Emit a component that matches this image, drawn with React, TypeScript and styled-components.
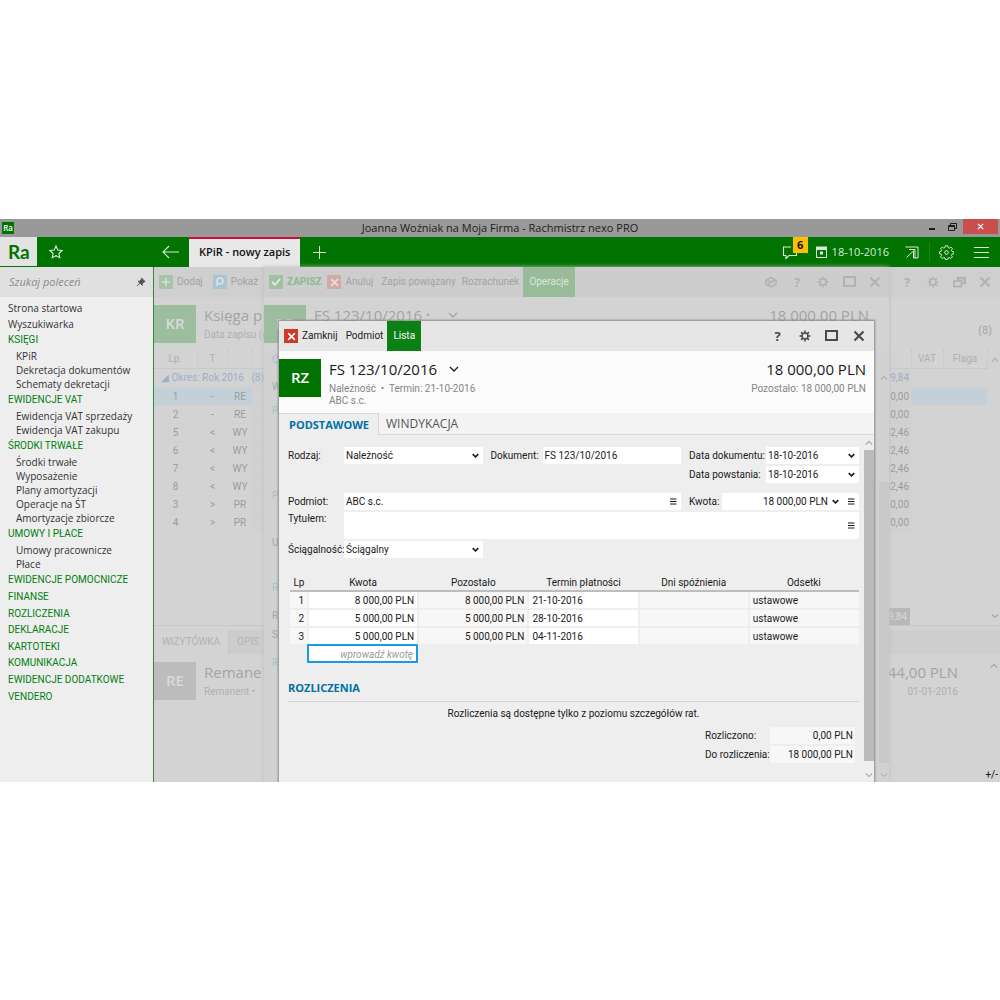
import React from "react";
import styled, { createGlobalStyle, css } from "styled-components";

const uiFont = `"Open Sans", "Noto Sans", sans-serif`;

const GlobalStyle = createGlobalStyle`
  *, *::before, *::after { box-sizing: border-box; }
  body {
    margin: 0;
    background: #fff;
    font-family: Roboto, "Noto Sans", sans-serif;
    font-size: 10px;
    line-height: 14px;
    color: #1a1a1a;
  }
  button, input, select, textarea { font: inherit; color: inherit; margin: 0; }
  button { border: 0; padding: 0; background: none; cursor: pointer; }
  ul { list-style: none; margin: 0; padding: 0; }
  h1, h2, p { margin: 0; font-weight: 400; }
  a { color: inherit; text-decoration: none; }
`;

/* ---------- icons ---------- */

const Svg = styled.svg`
  display: block;
  flex: none;
  fill: none;
  stroke: currentColor;
`;

type IconProps = { size?: number };

const CloseIcon = ({ size = 12 }: IconProps) => (
  <Svg width={size} height={size} viewBox="0 0 12 12" strokeWidth="2.2">
    <path d="M1.5 1.5l9 9M10.5 1.5l-9 9" />
  </Svg>
);
const SquareIcon = () => (
  <Svg width="13" height="12" viewBox="0 0 13 12" strokeWidth="2">
    <rect x="1" y="1" width="11" height="9" />
  </Svg>
);
const GearIcon = () => (
  <Svg width="12" height="12" viewBox="0 0 12 12" strokeWidth="1.6">
    <circle cx="6" cy="6" r="3" />
    <path d="M6 .5v2.2M6 9.3v2.2M.5 6h2.2M9.3 6h2.2M2.1 2.1l1.6 1.6M8.3 8.3l1.6 1.6M9.9 2.1L8.3 3.7M3.7 8.3L2.1 9.9" />
  </Svg>
);
const RestoreIcon = () => (
  <Svg width="13" height="12" viewBox="0 0 13 12" strokeWidth="1.8">
    <path d="M5 4V2h7v5H9.500" strokeWidth="2.4" />
    <rect x="1" y="5" width="7.500" height="5.500" />
  </Svg>
);
const CubeIcon = () => (
  <Svg width="12" height="12" viewBox="0 0 12 12" strokeWidth="1.6">
    <path d="M1 4.200L6 1.500l5 2.700v4L6 10.800 1 8.200zM3 4.800l3 1.400 4-2M3 8l6-3" />
  </Svg>
);
const ChevronDown = ({ size = 10, weight = 1.3 }: IconProps & { weight?: number }) => (
  <Svg width={size} height={size} viewBox="0 0 10 10" strokeWidth={weight}>
    <path d="M1 3l4 4 4-4" />
  </Svg>
);
const ChevronUp = () => (
  <Svg width="8" height="8" viewBox="0 0 10 10" strokeWidth="1.6">
    <path d="M1 7l4-4 4 4" />
  </Svg>
);
const LinesIcon = () => (
  <Svg width="7" height="7" viewBox="0 0 7 7" strokeWidth="1">
    <path d="M0 1h6.500M0 3.500h6.500M0 6h6.500" />
  </Svg>
);
const StarIcon = () => (
  <Svg width="14" height="14" viewBox="0 0 14 14" strokeWidth="1.1">
    <path d="M7 1l1.8 4 4.3.5L9.900 8.500l.9 4.300L7 10.700l-3.800 2.100.9-4.300L.9 5.500 5.200 5z" />
  </Svg>
);
const BackIcon = () => (
  <Svg width="17" height="14" viewBox="0 0 17 14" strokeWidth="1.1">
    <path d="M17 7H1M7 1L1 7l6 6" />
  </Svg>
);
const PlusIcon = ({ size = 13 }: IconProps) => (
  <Svg width={size} height={size} viewBox="0 0 13 13" strokeWidth={size < 13 ? 2.4 : 1}>
    <path d="M6.500 0v13M0 6.500h13" />
  </Svg>
);
const ChatIcon = () => (
  <Svg width="16" height="15" viewBox="0 0 16 15" strokeWidth="1.1">
    <path d="M9 2H1.500v8.500H4v3l3-3h7.500V7" />
  </Svg>
);
const CalendarIcon = () => (
  <Svg width="11" height="12" viewBox="0 0 11 12" strokeWidth="1">
    <rect x=".5" y="1" width="10" height="10.500" />
    <path d="M.5 2.500h10" strokeWidth="3" />
    <rect x="4.500" y="6" width="2" height="2" fill="currentColor" />
  </Svg>
);
const ExportIcon = () => (
  <Svg width="14" height="13" viewBox="0 0 14 13" strokeWidth="1">
    <path d="M.5 1h12.500v11H8.500V5.500M10 3.500L1.500 11.500M4 3.500h6v8.500" />
  </Svg>
);
const BigGearIcon = () => (
  <Svg width="15" height="15" viewBox="0 0 15 15" strokeWidth="1">
    <circle cx="7.500" cy="7.500" r="1.800" />
    <path d="M6.300.8h2.400l.4 1.800 1.200.5 1.600-1 1.500 1.600-1 1.600.5 1.100 1.800.4v2l-1.800.4-.5 1.200 1 1.500-1.600 1.600-1.500-1-1.200.5-.4 1.700H6.300l-.4-1.700-1.200-.5-1.500 1-1.600-1.600 1-1.500-.5-1.200-1.600-.4v-2l1.600-.4.5-1.100-1-1.600 1.600-1.600 1.500 1 1.200-.5z" />
  </Svg>
);
const MenuIcon = () => (
  <Svg width="15" height="11" viewBox="0 0 15 11" strokeWidth="1" shapeRendering="crispEdges">
    <path d="M0 .5h15M0 5.500h15M0 10.500h15" />
  </Svg>
);
const PinIcon = () => (
  <Svg width="10" height="10" viewBox="0 0 10 10" strokeWidth="1">
    <path d="M5.500 1l3.500 3.500-1 .3-1.700 1.700v1.800L2 4.200h1.800L5.300 2.500z" fill="currentColor" />
    <path d="M4 6L1 9" />
  </Svg>
);

/* ---------- shell ---------- */

const AppWindow = styled.div`
  margin-top: 219px;
`;

const TitleBar = styled.header`
  display: grid;
  grid-template-columns: 1fr auto 1fr;
  align-items: center;
  height: 18px;
  background: #999;
  color: #1c1c1c;
  font-family: ${uiFont};
  font-size: 11px;
`;

const AppBadge = styled.span`
  display: flex;
  align-items: center;
  justify-content: center;
  width: 12px;
  height: 12px;
  margin-left: 2px;
  background: #007300;
  color: #fff;
  font-size: 8px;
  line-height: 10px;
  font-weight: 600;
`;

const WindowControls = styled.div`
  display: flex;
  justify-content: flex-end;
  align-self: start;
  padding-right: 2px;
`;

const WindowButton = styled.button<{ $danger?: boolean }>`
  display: flex;
  align-items: center;
  justify-content: center;
  width: ${(p) => (p.$danger ? 35 : 21)}px;
  height: 15px;
  background: ${(p) => (p.$danger ? "#c94f4f" : "transparent")};
  color: ${(p) => (p.$danger ? "#fff" : "#1c1c1c")};
`;

const MainBar = styled.div`
  display: flex;
  height: 30px;
  background: #007300;
  color: #d9ead9;
  font-family: ${uiFont};
`;

const Logo = styled.span`
  width: 37px;
  margin-bottom: 1px;
  padding-left: 8px;
  background: #e3e3e3;
  color: #007300;
  font: 700 19px/29px Lato, sans-serif;
`;

const BarStart = styled.div`
  display: flex;
  align-items: center;
  justify-content: space-between;
  width: 152px;
  padding: 0 10px 0 12px;
`;

const ActiveTab = styled.button`
  padding: 0 10px 2px;
  border-top: 2px solid #d01030;
  background: #e8e8e8;
  color: #111;
  font-size: 11px;
  font-weight: 600;
`;

const IconButton = styled.button`
  display: flex;
  align-items: center;
  justify-content: center;
`;

const AddTab = styled(IconButton)`
  margin-left: 13px;
`;

const BarEnd = styled.div`
  display: flex;
  align-items: center;
  margin-left: auto;
  padding-right: 11px;
`;

const ChatButton = styled(IconButton)`
  position: relative;
  margin-right: 18px;
`;

const Count = styled.span`
  position: absolute;
  left: 11px;
  top: -8px;
  width: 15px;
  background: #ffc000;
  color: #111;
  font-size: 11px;
  font-weight: 700;
  line-height: 16px;
`;

const DateButton = styled.button`
  display: flex;
  align-items: center;
  gap: 5px;
  margin-right: 16px;
  font-size: 11px;
`;

const BarDivider = styled.span`
  width: 1px;
  height: 20px;
  margin: 0 9px 0 10px;
  background: #1d821d;
`;

const MenuButton = styled(IconButton)`
  margin-left: 20px;
`;

const Body = styled.div`
  display: grid;
  grid-template-columns: 154px minmax(0, 1fr);
`;

/* ---------- sidebar ---------- */

const Sidebar = styled.nav`
  border-right: 1px solid #2d8a3a;
  background: #eee;
  font-family: ${uiFont};
`;

const SearchBox = styled.label`
  display: flex;
  align-items: center;
  height: 30px;
  margin-bottom: 3px;
  padding: 0 7px 0 9px;
  background: #e0e0e0;
  color: #555;
  font-size: 11px;
`;

const SearchInput = styled.input`
  flex: 1;
  min-width: 0;
  border: 0;
  padding: 0;
  background: none;
  outline: 0;
  &::placeholder { color: #8c8c8c; font-style: italic; opacity: 1; }
`;

const NavLink = styled.a<{ $module?: boolean }>`
  display: block;
  padding-left: 8px;
  line-height: 16px;
  color: ${(p) => (p.$module ? "#007f0e" : "#333")};
  ${(p) => p.$module && css`font-family: Roboto, "Noto Sans", sans-serif;`}
  white-space: nowrap;
`;

const SubList = styled.ul`
  padding: 1px 0 1px 16px;
  line-height: 14px;
  color: #333;
`;

const ModuleList = styled.ul`
  display: grid;
  grid-auto-rows: 1fr;
  min-height: 133px;
  align-items: center;
`;

/* ---------- workspace ---------- */

const Workspace = styled.main`
  display: grid;
  grid-template-columns: minmax(0, 1fr);
  background: #d3d3d3;
`;

const Pane = styled.section`
  grid-area: 1 / 1;
  display: flex;
  flex-direction: column;
  min-width: 0;
  overflow: hidden;
  color: #a3a3a3;
`;

const EntryPane = styled(Pane)`
  margin: 0 111px 0 110px;
  background: #d2d2d2;
  box-shadow: 0 0 4px #bdbdbd;
`;

const Dialog = styled(Pane)`
  margin: 54px 126px 0 125px;
  background: #eee;
  color: #1a1a1a;
  box-shadow: 0 0 2px 1px #8a8a8a;
`;

const Toolbar = styled.div<{ $bg: string }>`
  display: flex;
  align-items: center;
  height: 30px;
  padding-left: 5px;
  background: ${(p) => p.$bg};
`;

const ToolButton = styled.button<{ $strong?: boolean; $gap?: number }>`
  display: flex;
  align-items: center;
  gap: 4px;
  margin-right: ${(p) => p.$gap ?? 8}px;
  ${(p) => p.$strong && css`color: #8fb893; font-weight: 700;`}
  white-space: nowrap;
`;

const ActiveTool = styled.button<{ $bg: string; $color: string }>`
  align-self: stretch;
  padding: 0 6px;
  background: ${(p) => p.$bg};
  color: ${(p) => p.$color};
`;

const Chip = styled.span<{ $bg: string; $color: string }>`
  display: flex;
  align-items: center;
  justify-content: center;
  width: 14px;
  height: 14px;
  background: ${(p) => p.$bg};
  color: ${(p) => p.$color};
`;

const ToolEnd = styled.div<{ $color: string; $pad: number; $step: number }>`
  display: grid;
  grid-auto-flow: column;
  grid-auto-columns: ${(p) => p.$step}px;
  justify-items: center;
  align-items: center;
  margin-left: auto;
  padding-right: ${(p) => p.$pad}px;
  color: ${(p) => p.$color};
  font-family: ${uiFont};
  font-size: 13px;
  font-weight: 700;
`;

const PaneHeader = styled.div<{ $bg: string; $height: number; $pad: number }>`
  display: flex;
  gap: 8px;
  height: ${(p) => p.$height}px;
  padding: 8px ${(p) => p.$pad}px 0 0;
  background: ${(p) => p.$bg};
`;

const Tile = styled.span<{ $bg: string; $color: string }>`
  flex: none;
  width: 42px;
  height: 38px;
  background: ${(p) => p.$bg};
  color: ${(p) => p.$color};
  font-family: ${uiFont};
  font-size: 15px;
  font-weight: 600;
  line-height: 37px;
  text-align: center;
`;

const Heading = styled.h1`
  display: flex;
  align-items: center;
  gap: 12px;
  font-family: ${uiFont};
  font-size: 15px;
  line-height: 20px;
  margin-bottom: 4px;
  white-space: nowrap;
`;

const Dot = styled.span`
  margin: 0 6px 0 -8px;
  font-size: 10px;
`;

const Sub = styled.p<{ $color: string }>`
  color: ${(p) => p.$color};
  line-height: 12px;
  white-space: nowrap;
`;

const Amounts = styled.div`
  display: flex;
  flex-direction: column;
  align-items: flex-end;
  margin-left: auto;
`;

const RowCount = styled.span`
  margin: 19px 0 0 auto;
  font-size: 11px;
`;

/* ---------- ledger behind ---------- */

const LedgerTable = styled.table`
  width: 100%;
  border-collapse: collapse;
  table-layout: fixed;
  text-align: center;
  th, td { height: 18px; padding: 1px 0 0; font-weight: 400; white-space: nowrap; }
  th { border-right: 1px dotted #c6c6c6; border-bottom: 1px solid #c9c9c9; color: #b0b0b0; }
`;

const LedgerRow = styled.tr<{ $selected?: boolean; $group?: boolean }>`
  color: ${(p) => (p.$group ? "#9fadcb" : "#9c9c9c")};
  background: ${(p) => (p.$selected ? "#c3d0d7" : "transparent")};
  border-bottom: 1px solid #d0d0d0;
  ${(p) => p.$group && css`td { height: 19px; }`}
`;

const AmountCell = styled.td`
  && { padding-right: 2px; }
  background: #d1d1d1;
  text-align: right;
`;

const GroupCell = styled.td`
  && { padding-left: 7px; }
  text-align: left;
`;

const ScrollCell = styled.td`
  background: #d3d3d3;
`;

const ScrollHead = styled.th`
  && { padding-left: 3px; border: 0; }
`;

const SummaryRow = styled.div`
  display: flex;
  align-items: center;
  justify-content: flex-end;
  height: 18px;
  margin-top: 76px;
  padding-right: 1px;
  border-bottom: 1px solid #c8c8c8;
`;

const Total = styled.span`
  margin-right: 81px;
  padding: 2px 3px 1px 10px;
  background: #b8b8b8;
  color: #d9d9d9;
`;

const CardTabs = styled.div`
  display: flex;
  height: 24px;
  margin-top: 4px;
  background: #cecece;
  color: #b2b2b2;
`;

const CardTab = styled.button<{ $active?: boolean }>`
  padding: 0 8px;
  border-right: 1px solid #c4c4c4;
  background: ${(p) => (p.$active ? "#d3d3d3" : "#cdcdcd")};
`;

const CardScroll = styled.span`
  margin-left: 24px;
`;

const CornerTool = styled.button`
  align-self: flex-end;
  margin: auto 2px 0 0;
  color: #111;
`;

const FaintLabels = styled.div`
  width: 8px;
  margin-left: 8px;
  line-height: 18px;
`;

const FaintLabel = styled.div<{ $blue?: boolean; $before: number }>`
  margin-top: ${(p) => p.$before}px;
  color: ${(p) => (p.$blue ? "#a4bfcc" : "#a5a5a5")};
`;

const EntryBody = styled.div`
  display: flex;
  flex: 1;
  justify-content: space-between;
`;

/* ---------- dialog ---------- */

const TabBar = styled.div`
  display: flex;
  height: 22px;
  border-bottom: 1px solid #d8d8d8;
  background: #f3f3f3;
  font-family: ${uiFont};
`;

const Tab = styled.button<{ $active?: boolean }>`
  height: 22px;
  padding: 0 7px;
  color: #555;
  font-size: 12px;
  ${(p) => p.$active && css`
    padding: 0 9px 0 10px;
    border-top: 1px solid #d8d8d8;
    border-right: 1px solid #d8d8d8;
    background: #eee;
    color: #0070a8;
    font-size: 11px;
    font-weight: 700;
  `}
`;

const DialogBody = styled.div`
  display: flex;
`;

const Content = styled.div`
  flex: 1;
  min-width: 0;
  padding: 12px 5px 19px 9px;
`;

const FormGrid = styled.div`
  display: grid;
  grid-template-columns: 56px minmax(0, 1fr) 60px minmax(0, 1fr) 85px 93px;
  row-gap: 2px;
  align-items: center;
`;

const Label = styled.label<{ $indent?: number; $top?: boolean }>`
  padding-left: ${(p) => p.$indent ?? 0}px;
  align-self: ${(p) => (p.$top ? "start" : "center")};
  white-space: nowrap;
`;

const Field = styled.div<{ $span?: number; $col?: number }>`
  grid-column: ${(p) => p.$col ?? "auto"} / span ${(p) => p.$span ?? 1};
  display: flex;
  align-items: center;
  align-self: stretch;
  gap: 8px;
  min-width: 0;
  padding-right: 4px;
  background: #fff;
`;

const fieldText = css`
  flex: 1;
  min-width: 0;
  height: 100%;
  border: 0;
  padding: 0 0 0 2px;
  background: none;
  outline: 0;
  line-height: 14px;
`;

const TextInput = styled.input<{ $right?: boolean }>`
  ${fieldText}
  text-align: ${(p) => (p.$right ? "right" : "left")};
`;

const TextArea = styled.textarea`
  ${fieldText}
  resize: none;
`;

const Select = styled.select`
  ${fieldText}
  appearance: none;
`;

const AmountGroup = styled.div`
  grid-column: 5 / span 2;
  display: grid;
  grid-template-columns: 41px minmax(0, 1fr);
  align-items: center;
  align-self: stretch;
`;

const AmountField = styled(Field)`
  gap: 4px;
  & > button { margin-left: 5px; }
`;

const DateLabel = styled(Label)`
  grid-column: 5;
`;

const UpperForm = styled(FormGrid)`
  grid-template-rows: 17px 17px;
  margin-bottom: 10px;
`;

const LowerForm = styled(FormGrid)`
  grid-template-rows: 17px 27px 17px;
`;

const Installments = styled.table`
  width: calc(100% - 2px);
  margin: 16px 0 0 2px;
  border-collapse: collapse;
  table-layout: fixed;
  th { height: 17px; padding: 1px 0 0; border-bottom: 2px solid #bdbdbd; font-weight: 400; }
  td { height: 18px; padding: 1px 3px 0; border-bottom: 2px solid #eee; }
  td + td { border-left: 2px solid #eee; }
`;

const NumberColumn = styled.col`
  width: 18px;
`;

const Cell = styled.td<{ $white?: boolean; $right?: boolean }>`
  background: ${(p) => (p.$white ? "#fff" : "#f7f7f7")};
  text-align: ${(p) => (p.$right ? "right" : "left")};
`;

const NewAmount = styled.input`
  display: block;
  width: 111px;
  height: 19px;
  margin: -2px 0 0 19px;
  padding: 1px 3px 0;
  border: 2px solid #1a9ae0;
  border-radius: 1px;
  background: #fff;
  text-align: right;
  outline: 0;
  &::placeholder { color: #999; font-style: italic; opacity: 1; }
`;

const SectionTitle = styled.h2`
  margin-top: 15px;
  padding-bottom: 4px;
  border-bottom: 1px solid #d3d3d3;
  color: #0070a8;
  font-family: ${uiFont};
  font-size: 11px;
  font-weight: 700;
  line-height: 19px;
`;

const Note = styled.p`
  margin: 5px 0 6px;
  text-align: center;
`;

const Totals = styled.dl`
  display: grid;
  grid-template-columns: 65px 85px;
  justify-content: end;
  gap: 2px 0;
  margin: 0 4px 0 0;
  line-height: 17px;
  dt { white-space: nowrap; }
  dd { margin: 0; padding-right: 2px; background: #f7f7f7; text-align: right; }
`;

const ScrollTrack = styled.div<{ $color: string }>`
  display: flex;
  flex-direction: column;
  align-items: center;
  justify-content: space-between;
  gap: 3px;
  width: 10px;
  padding: 4px 0 3px;
  color: ${(p) => p.$color};
`;

const DialogScroll = styled(ScrollTrack)`
  & > :last-child { margin-top: 7px; }
`;

const EntryScroll = styled(ScrollTrack)`
  padding-top: 24px;
  gap: 8px;
`;

const ScrollThumb = styled.div<{ $bg: string; $offset?: number }>`
  flex: 1;
  align-self: stretch;
  margin-top: ${(p) => p.$offset ?? 0}px;
  background: ${(p) => p.$bg};
`;

/* ---------- data ---------- */

type NavItem = { label: string; module?: boolean; children?: string[] };

const navItems: NavItem[] = [
  { label: "Strona startowa" },
  { label: "Wyszukiwarka" },
  { label: "KSIĘGI", module: true, children: ["KPiR", "Dekretacja dokumentów", "Schematy dekretacji"] },
  { label: "EWIDENCJE VAT", module: true, children: ["Ewidencja VAT sprzedaży", "Ewidencja VAT zakupu"] },
  {
    label: "ŚRODKI TRWAŁE",
    module: true,
    children: ["Środki trwałe", "Wyposażenie", "Plany amortyzacji", "Operacje na ŚT", "Amortyzacje zbiorcze"],
  },
  { label: "UMOWY I PŁACE", module: true, children: ["Umowy pracownicze", "Płace"] },
];

const closedModules = [
  "EWIDENCJE POMOCNICZE", "FINANSE", "ROZLICZENIA", "DEKLARACJE",
  "KARTOTEKI", "KOMUNIKACJA", "EWIDENCJE DODATKOWE", "VENDERO",
];

const ledgerColumns = [43, 31, 24, undefined, 32, 44, 13];

const ledger = [
  ["1", "-", "RE", "0,00"],
  ["2", "-", "RE", "0,00"],
  ["5", "<", "WY", "32,46"],
  ["6", "<", "WY", "32,46"],
  ["7", "<", "WY", "32,46"],
  ["8", "<", "WY", "32,46"],
  ["3", ">", "PR", "0,00"],
  ["4", ">", "PR", "0,00"],
];

const installments = [
  ["1", "8 000,00 PLN", "21-10-2016"],
  ["2", "5 000,00 PLN", "28-10-2016"],
  ["3", "5 000,00 PLN", "04-11-2016"],
];

const faintLabels = [
  { text: "O", before: 1, blue: true },
  { text: "W", before: 9 },
  { text: "P", before: 6, blue: true },
  { text: "P", before: 67, blue: true },
  { text: "U", before: 29 },
  { text: "R", before: 27, blue: true },
  { text: "R", before: 10 },
  { text: "S", before: 1 },
  { text: "R", before: 10, blue: true },
];

/* ---------- parts ---------- */

function Navigation() {
  return (
    <Sidebar>
      <SearchBox>
        <SearchInput placeholder="Szukaj poleceń" aria-label="Szukaj poleceń" />
        <PinIcon />
      </SearchBox>
      <ul>
        {navItems.map((item) => (
          <li key={item.label}>
            <NavLink href="#" $module={item.module}>{item.label}</NavLink>
            {item.children && (
              <SubList>
                {item.children.map((c) => (
                  <li key={c}><a href="#">{c}</a></li>
                ))}
              </SubList>
            )}
          </li>
        ))}
      </ul>
      <ModuleList>
        {closedModules.map((m) => (
          <li key={m}><NavLink href="#" $module>{m}</NavLink></li>
        ))}
      </ModuleList>
    </Sidebar>
  );
}

function Ledger() {
  return (
    <Pane>
      <Toolbar $bg="#cfcfcf">
        <ToolButton $gap={10}><Chip $bg="#a6c5a8" $color="#d8e0d8"><PlusIcon size={8} /></Chip>Dodaj</ToolButton>
        <ToolButton>
          <Chip $bg="#a9c6d4" $color="#dde4e8">
            <Svg width="10" height="10" viewBox="0 0 10 10" strokeWidth="1.6">
              <circle cx="5" cy="4" r="3" /><path d="M3 6L1 9" />
            </Svg>
          </Chip>
          Pokaż
        </ToolButton>
        <ToolEnd $color="#b2b2b2" $pad={2} $step={26}>
          <IconButton aria-label="Pomoc">?</IconButton>
          <IconButton aria-label="Ustawienia"><GearIcon /></IconButton>
          <IconButton aria-label="Przywróć"><RestoreIcon /></IconButton>
          <IconButton aria-label="Zamknij okno"><CloseIcon /></IconButton>
        </ToolEnd>
      </Toolbar>
      <PaneHeader $bg="#d3d3d3" $height={53} $pad={8}>
        <Tile $bg="#9dbd9f" $color="#d5ddd5">KR</Tile>
        <div>
          <Heading>Księga p</Heading>
          <Sub $color="#b0b0b0">Data zapisu (d</Sub>
        </div>
        <RowCount>(8)</RowCount>
      </PaneHeader>
      <LedgerTable>
        <colgroup>
          {ledgerColumns.map((w, i) => <col key={i} width={w} />)}
        </colgroup>
        <thead>
          <tr><th>Lp.</th><th>T</th><th /><th /><th>VAT</th><th>Flaga</th><ScrollHead><ChevronUp /></ScrollHead></tr>
        </thead>
        <tbody>
          <LedgerRow $group>
            <GroupCell colSpan={3}>◢ Okres: Rok 2016 &nbsp; (8)</GroupCell>
            <AmountCell>29,84</AmountCell><td /><td /><ScrollCell />
          </LedgerRow>
          {ledger.map((r) => (
            <LedgerRow key={r[0]} $selected={r[0] === "1"}>
              <td>{r[0]}</td><td>{r[1]}</td><td>{r[2]}</td><AmountCell>{r[3]}</AmountCell><td /><td /><ScrollCell />
            </LedgerRow>
          ))}
        </tbody>
      </LedgerTable>
      <SummaryRow><Total>29,84</Total><ChevronDown size={8} /></SummaryRow>
      <CardTabs>
        <CardTab $active>WIZYTÓWKA</CardTab>
        <CardTab>OPIS</CardTab>
      </CardTabs>
      <PaneHeader $bg="#d3d3d3" $height={50} $pad={2}>
        <Tile $bg="#bcbcbc" $color="#d9d9d9">RE</Tile>
        <div>
          <Heading>Remane</Heading>
          <Sub $color="#b0b0b0">Remanent •</Sub>
        </div>
        <Amounts>
          <Heading as="p">44,00 PLN</Heading>
          <Sub $color="#b0b0b0">01-01-2016</Sub>
        </Amounts>
        <CardScroll><ChevronUp /></CardScroll>
      </PaneHeader>
      <CornerTool>+/-</CornerTool>
    </Pane>
  );
}

function Entry() {
  return (
    <EntryPane>
      <Toolbar $bg="#cdcdcd">
        <ToolButton $strong $gap={6}>
          <Chip $bg="#9fc3a1" $color="#e4ebe4">
            <Svg width="10" height="10" viewBox="0 0 10 10" strokeWidth="1.8"><path d="M1 5l3 3 5-6" /></Svg>
          </Chip>
          ZAPISZ
        </ToolButton>
        <ToolButton><Chip $bg="#d3aaa4" $color="#e8dedd"><CloseIcon size={9} /></Chip>Anuluj</ToolButton>
        <ToolButton $gap={6}>Zapis powiązany</ToolButton>
        <ToolButton $gap={4}>Rozrachunek</ToolButton>
        <ActiveTool $bg="#98bb9a" $color="#dbe6db">Operacje</ActiveTool>
        <ToolEnd $color="#b2b2b2" $pad={1} $step={26}>
          <IconButton aria-label="Moduły"><CubeIcon /></IconButton>
          <IconButton aria-label="Pomoc">?</IconButton>
          <IconButton aria-label="Ustawienia"><GearIcon /></IconButton>
          <IconButton aria-label="Maksymalizuj"><SquareIcon /></IconButton>
          <IconButton aria-label="Zamknij okno"><CloseIcon /></IconButton>
        </ToolEnd>
      </Toolbar>
      <PaneHeader $bg="#d3d3d3" $height={53} $pad={20}>
        <Tile $bg="#9dbd9f" $color="#d5ddd5">PP</Tile>
        <div>
          <Heading>FS 123/10/2016 <Dot>•</Dot><ChevronDown /></Heading>
        </div>
        <Amounts><Heading as="p">18 000,00 PLN</Heading></Amounts>
      </PaneHeader>
      <EntryBody>
        <FaintLabels>
          {faintLabels.map((l, i) => (
            <FaintLabel key={i} $before={l.before} $blue={l.blue}>{l.text}</FaintLabel>
          ))}
        </FaintLabels>
        <EntryScroll $color="#b4b4b4">
          <ChevronUp />
          <ScrollThumb $bg="#c9c9c9" $offset={92} />
          <ChevronDown size={8} />
        </EntryScroll>
      </EntryBody>
    </EntryPane>
  );
}

function Settlement() {
  return (
    <Dialog role="dialog" aria-label="FS 123/10/2016">
      <Toolbar $bg="#e6e6e6">
        <ToolButton><Chip $bg="#cf3a26" $color="#fff"><CloseIcon size={9} /></Chip>Zamknij</ToolButton>
        <ToolButton $gap={4}>Podmiot</ToolButton>
        <ActiveTool $bg="#0c8014" $color="#fff">Lista</ActiveTool>
        <ToolEnd $color="#4a4a4a" $pad={2} $step={27}>
          <IconButton aria-label="Pomoc">?</IconButton>
          <IconButton aria-label="Ustawienia"><GearIcon /></IconButton>
          <IconButton aria-label="Maksymalizuj"><SquareIcon /></IconButton>
          <IconButton aria-label="Zamknij okno"><CloseIcon /></IconButton>
        </ToolEnd>
      </Toolbar>
      <PaneHeader $bg="#fbfbfb" $height={62} $pad={8}>
        <Tile $bg="#007300" $color="#fff">RZ</Tile>
        <div>
          <Heading>FS 123/10/2016 <ChevronDown /></Heading>
          <Sub $color="#858585">Należność &nbsp;•&nbsp; Termin: 21-10-2016</Sub>
          <Sub $color="#858585">ABC s.c.</Sub>
        </div>
        <Amounts>
          <Heading as="p">18 000,00 PLN</Heading>
          <Sub $color="#858585">Pozostało: 18 000,00 PLN</Sub>
        </Amounts>
      </PaneHeader>
      <TabBar>
        <Tab $active>PODSTAWOWE</Tab>
        <Tab>WINDYKACJA</Tab>
      </TabBar>
      <DialogBody>
        <Content>
          <UpperForm>
            <Label htmlFor="kind">Rodzaj:</Label>
            <Field>
              <Select id="kind"><option>Należność</option></Select>
              <ChevronDown size={7} weight={2.2} />
            </Field>
            <Label htmlFor="doc" $indent={8}>Dokument:</Label>
            <Field><TextInput id="doc" defaultValue="FS 123/10/2016" /></Field>
            <Label htmlFor="docDate" $indent={8}>Data dokumentu:</Label>
            <Field>
              <Select id="docDate"><option>18-10-2016</option></Select>
              <ChevronDown size={7} weight={2.2} />
            </Field>
            <DateLabel htmlFor="madeDate" $indent={8}>Data powstania:</DateLabel>
            <Field>
              <Select id="madeDate"><option>18-10-2016</option></Select>
              <ChevronDown size={7} weight={2.2} />
            </Field>
          </UpperForm>
          <LowerForm>
            <Label htmlFor="party">Podmiot:</Label>
            <Field $span={3} $col={2}>
              <TextInput id="party" defaultValue="ABC s.c." />
              <IconButton type="button" aria-label="Wybierz podmiot"><LinesIcon /></IconButton>
            </Field>
            <AmountGroup>
              <Label htmlFor="sum" $indent={8}>Kwota:</Label>
              <AmountField>
                <TextInput id="sum" $right defaultValue="18 000,00 PLN" />
                <ChevronDown size={7} weight={2.2} />
                <IconButton type="button" aria-label="Opcje kwoty"><LinesIcon /></IconButton>
              </AmountField>
            </AmountGroup>
            <Label htmlFor="title" $top>Tytułem:</Label>
            <Field $span={5} $col={2}>
              <TextArea id="title" />
              <IconButton type="button" aria-label="Wybierz tytuł"><LinesIcon /></IconButton>
            </Field>
            <Label htmlFor="collect">Ściągalność:</Label>
            <Field>
              <Select id="collect"><option>Ściągalny</option></Select>
              <ChevronDown size={7} weight={2.2} />
            </Field>
          </LowerForm>
          <Installments>
            <colgroup>
              <NumberColumn />
              <col /><col /><col /><col /><col />
            </colgroup>
            <thead>
              <tr>
                <th>Lp</th><th>Kwota</th><th>Pozostało</th><th>Termin płatności</th><th>Dni spóźnienia</th><th>Odsetki</th>
              </tr>
            </thead>
            <tbody>
              {installments.map(([no, sum, due]) => (
                <tr key={no}>
                  <Cell $right>{no}</Cell>
                  <Cell $white $right>{sum}</Cell>
                  <Cell $right>{sum}</Cell>
                  <Cell $white>{due}</Cell>
                  <Cell />
                  <Cell>ustawowe</Cell>
                </tr>
              ))}
            </tbody>
          </Installments>
          <NewAmount placeholder="wprowadź kwotę" aria-label="Nowa kwota" />
          <SectionTitle>ROZLICZENIA</SectionTitle>
          <Note>Rozliczenia są dostępne tylko z poziomu szczegółów rat.</Note>
          <Totals>
            <dt>Rozliczono:</dt><dd>0,00 PLN</dd>
            <dt>Do rozliczenia:</dt><dd>18 000,00 PLN</dd>
          </Totals>
        </Content>
        <DialogScroll $color="#a8a8a8"><ChevronUp /><ScrollThumb $bg="#bababa" /><ChevronDown size={8} /></DialogScroll>
      </DialogBody>
    </Dialog>
  );
}

export default function App() {
  return (
    <>
      <GlobalStyle />
      <AppWindow>
        <TitleBar>
          <AppBadge>Ra</AppBadge>
          <span>Joanna Woźniak na Moja Firma - Rachmistrz nexo PRO</span>
          <WindowControls>
            <WindowButton aria-label="Minimalizuj">
              <Svg width="8" height="8" viewBox="0 0 8 8" strokeWidth="2"><path d="M1 6h6" /></Svg>
            </WindowButton>
            <WindowButton aria-label="Przywróć">
              <Svg width="9" height="8" viewBox="0 0 9 8" strokeWidth="1"><path d="M2.500 2V.5h6v5H7M.5 2.500h6v5h-6zM.5 3.500h6" /></Svg>
            </WindowButton>
            <WindowButton $danger aria-label="Zamknij"><CloseIcon size={7} /></WindowButton>
          </WindowControls>
        </TitleBar>
        <MainBar>
          <Logo>Ra</Logo>
          <BarStart>
            <IconButton aria-label="Ulubione"><StarIcon /></IconButton>
            <IconButton aria-label="Wstecz"><BackIcon /></IconButton>
          </BarStart>
          <ActiveTab>KPiR - nowy zapis</ActiveTab>
          <AddTab aria-label="Nowa karta"><PlusIcon /></AddTab>
          <BarEnd>
            <ChatButton aria-label="Wiadomości"><ChatIcon /><Count>6</Count></ChatButton>
            <DateButton><CalendarIcon />18-10-2016</DateButton>
            <IconButton aria-label="Eksport"><ExportIcon /></IconButton>
            <BarDivider />
            <IconButton aria-label="Ustawienia"><BigGearIcon /></IconButton>
            <MenuButton aria-label="Menu"><MenuIcon /></MenuButton>
          </BarEnd>
        </MainBar>
        <Body>
          <Navigation />
          <Workspace>
            <Ledger />
            <Entry />
            <Settlement />
          </Workspace>
        </Body>
      </AppWindow>
    </>
  );
}
